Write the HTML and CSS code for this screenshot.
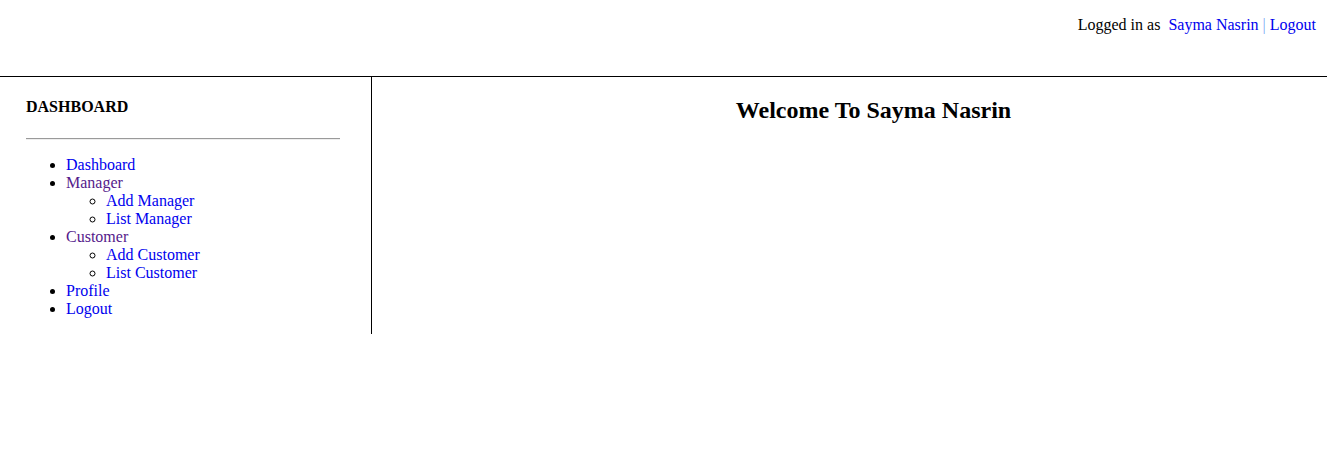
FILE: index.html
```html
<!DOCTYPE html>
<html>
<head>
<meta charset="utf-8">
<link rel="stylesheet" href="styles.css">
</head>
<body>
<div class="page">
  <div class="topbar">
    <span class="who">Logged in as&nbsp; <a href="#" class="link">Sayma Nasrin</a> <span class="sep">|</span> <a href="#" class="link">Logout</a></span>
  </div>
  <div class="main-row">
    <div class="sidebar">
      <div class="side-title">DASHBOARD</div>
      <hr class="side-rule">
      <ul class="menu">
        <li><a href="#" class="link">Dashboard</a></li>
        <li><span class="group">Manager</span>
          <ul class="submenu">
            <li><a href="#" class="link">Add Manager</a></li>
            <li><a href="#" class="link">List Manager</a></li>
          </ul>
        </li>
        <li><span class="group">Customer</span>
          <ul class="submenu">
            <li><a href="#" class="link">Add Customer</a></li>
            <li><a href="#" class="link">List Customer</a></li>
          </ul>
        </li>
        <li><a href="#" class="link">Profile</a></li>
        <li><a href="#" class="link">Logout</a></li>
      </ul>
    </div>
    <div class="content">
      <h2 class="welcome">Welcome To Sayma Nasrin</h2>
    </div>
  </div>
</div>
</body>
</html>
```
FILE: styles.css
```css
html, body {
  margin: 0;
  padding: 0;
  background: #fff;
}
body {
  font-family: "Liberation Serif", "Times New Roman", serif;
  font-size: 16px;
  line-height: 18px;
  color: #000;
}
.topbar {
  height: 77px;
  border-bottom: 1px solid #000;
  box-sizing: border-box;
  display: flex;
  justify-content: flex-end;
  padding: 16px 11px 0 0;
}
.link {
  color: #0000ee;
  text-decoration: none;
}
.sep {
  color: #7aa8f5;
}
.main-row {
  display: flex;
  align-items: flex-start;
}
.sidebar {
  width: 372px;
  box-sizing: border-box;
  border-right: 1px solid #000;
  padding: 21px 31px 16px 26px;
}
.side-title {
  font-weight: bold;
  font-size: 16px;
  line-height: 18px;
}
.side-rule {
  margin: 22px 0 16px 0;
  border: 0;
  border-top: 1px solid #9a9a9a;
  border-bottom: 1px solid #eeeeee;
  height: 0;
}
.menu {
  margin: 0;
  padding-left: 40px;
  list-style: disc;
}
.submenu {
  margin: 0;
  padding-left: 40px;
  list-style: circle;
}
.group {
  color: #551a8b;
}
.content {
  flex: 1;
  padding: 19px 0 0 48px;
}
.welcome {
  margin: 0;
  text-align: center;
  font-size: 24px;
  line-height: 28px;
  font-weight: bold;
}
```
